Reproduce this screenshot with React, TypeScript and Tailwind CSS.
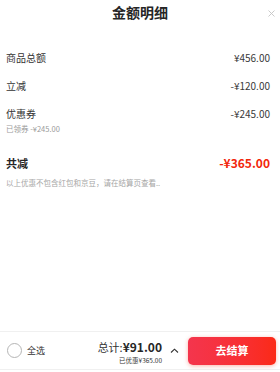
export default function App() {
  return (
    <div
      className="w-[280px] h-[372px] bg-white flex flex-col text-[#333]"
      style={{ fontFamily: '"Noto Sans CJK SC", "Noto Sans", sans-serif' }}
    >
      {/* Header */}
      <div className="relative h-[24px] flex items-center justify-center">
        <span className="text-[14px] font-bold leading-[24px] text-[#262626]">金额明细</span>
        <svg
          className="absolute right-[5px] top-[10px]"
          width="7"
          height="7"
          viewBox="0 0 7 7"
          fill="none"
          stroke="#c4c4c4"
          strokeWidth="0.9"
        >
          <path d="M0.5 0.5L6.5 6.5M6.5 0.5L0.5 6.5" />
        </svg>
      </div>

      {/* Rows */}
      <div className="pl-[6px] pr-[10px] flex flex-col">
        <div className="mt-[25px] h-[16px] flex items-center justify-between text-[10px]">
          <span>商品总额</span>
          <span className="text-[#3a3a3a]">¥456.00</span>
        </div>
        <div className="mt-[12px] h-[16px] flex items-center justify-between text-[10px]">
          <span>立减</span>
          <span className="text-[#3a3a3a]">-¥120.00</span>
        </div>
        <div className="mt-[12px] h-[16px] flex items-center justify-between text-[10px]">
          <span>优惠券</span>
          <span className="text-[#3a3a3a]">-¥245.00</span>
        </div>
        <div className="mt-[2px] h-[12px] flex items-center text-[7.5px] text-[#9a9a9a]">
          已领券 -¥245.00
        </div>
        <div className="mt-[20px] h-[16px] flex items-center justify-between">
          <span className="text-[11px] font-bold text-[#262626]">共减</span>
          <span className="text-[12px] font-bold text-[#f2270c]">-¥365.00</span>
        </div>
        <div className="mt-[6px] h-[12px] flex items-center text-[7.5px] text-[#a6a6a6]">
          以上优惠不包含红包和京豆，请在结算页查看..
        </div>
      </div>

      <div className="flex-1" />

      {/* Bottom bar */}
      <div className="h-[39px] mb-[2px] border-t border-b border-[#f0f0f0] flex items-center pl-[7px] pr-[4px]">
        <div className="w-[15px] h-[15px] rounded-full border-[1.5px] border-[#b5b5b5]" />
        <span className="ml-[5px] text-[9px] text-[#333]">全选</span>
        <div className="ml-auto flex flex-col items-end gap-[2px] mt-[2px]">
          <div className="flex items-baseline h-[15px] leading-[15px]">
            <span className="text-[11px] text-[#333]">总计:</span>
            <span className="text-[12px] font-bold text-[#262626]">¥91.00</span>
          </div>
          <span className="text-[6.5px] h-[9px] leading-[9px] text-[#333]">已优惠¥365.00</span>
        </div>
        <svg className="ml-[8px]" width="9" height="6" viewBox="0 0 9 6" fill="none" stroke="#333" strokeWidth="1.1">
          <path d="M1 4.5L4.5 1.2L8 4.5" />
        </svg>
        <button className="ml-[9px] w-[88px] h-[28px] rounded-[5px] bg-gradient-to-r from-[#f4354d] to-[#fb2a16] text-white text-[11px] font-bold flex items-center justify-center shadow-[0_1px_4px_rgba(242,39,12,0.35)]">
          去结算
        </button>
      </div>
    </div>
  );
}
